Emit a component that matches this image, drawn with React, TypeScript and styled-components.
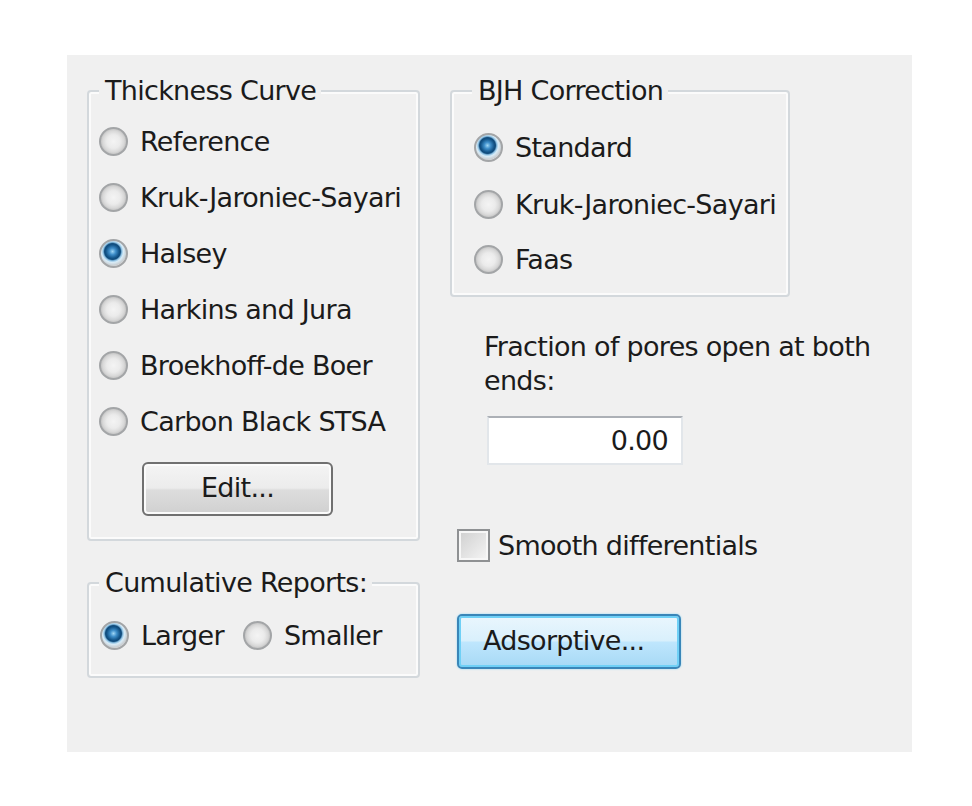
import React from 'react';
import styled, { createGlobalStyle } from 'styled-components';

const Global = createGlobalStyle`
  html, body { margin: 0; padding: 0; background: #ffffff; }
  body { font-family: "DejaVu Sans", Verdana, sans-serif; }
`;

const Page = styled.div`
  width: 972px;
  height: 806px;
  box-sizing: border-box;
  padding: 55px 0 0 67px;
`;

const Panel = styled.div`
  width: 845px;
  height: 697px;
  box-sizing: border-box;
  background: #f0f0f0;
  padding: 21px 0 0 20px;
  display: grid;
  grid-template-columns: 333px 440px;
  column-gap: 30px;
  align-items: start;
  font-size: 27px;
  letter-spacing: -0.7px;
  color: #1b1b1b;
`;

const Column = styled.div`
  display: flex;
  flex-direction: column;
  align-items: flex-start;
`;

const GroupBox = styled.fieldset<{ $w: number; $pl: number; $pt: number; $pb: number; $mt?: number }>`
  margin: ${(p) => p.$mt ?? 0}px 0 0 0;
  width: ${(p) => p.$w}px;
  box-sizing: border-box;
  min-width: 0;
  border: 2px solid #d3d8dc;
  border-radius: 4px;
  box-shadow: inset 0 0 0 2px #fbfbfb;
  padding: ${(p) => p.$pt}px 0 ${(p) => p.$pb}px ${(p) => p.$pl}px;
  display: flex;
  flex-direction: column;
  align-items: flex-start;
`;

const Legend = styled.legend<{ $ml?: number }>`
  margin-left: ${(p) => p.$ml ?? 0}px;
  padding: 0 5px 0 6px;
  line-height: 30px;
  background: #f0f0f0;
`;

const OptionRow = styled.label<{ $h?: number }>`
  display: flex;
  align-items: center;
  gap: 12px;
  height: ${(p) => p.$h ?? 56}px;
  white-space: nowrap;
`;

const InlineOptions = styled.div`
  display: flex;
  align-items: center;
  gap: 19px;
`;

const RadioCircle = styled.span<{ $checked?: boolean }>`
  width: 29px;
  height: 29px;
  flex: none;
  box-sizing: border-box;
  border-radius: 50%;
  border: 2px solid #a3a5a7;
  background: ${(p) =>
    p.$checked
      ? 'radial-gradient(circle at 46% 42%, #9fd6f5 0%, #3f8fca 16%, #125387 34%, #0f4a7a 40%, #8ec2e4 47%, #d9ecf7 55%, #c9cdd0 70%, #f6f6f6 76%)'
      : 'radial-gradient(circle at 50% 50%, #f4f4f4 0%, #ebebeb 38%, #dadada 58%, #c8c8c8 70%, #f6f6f6 76%)'};
`;

const CheckBox = styled.span`
  width: 33px;
  height: 33px;
  flex: none;
  box-sizing: border-box;
  border: 2px solid #8f9193;
  box-shadow: inset 0 0 0 2px #f7f7f7;
  background: linear-gradient(135deg, #cfcfcf 0%, #e4e4e4 55%, #f6f6f6 100%);
`;

const EditButton = styled.button`
  margin: 13px 0 0 43px;
  width: 191px;
  height: 54px;
  box-sizing: border-box;
  border: 2px solid #707070;
  border-radius: 6px;
  background: linear-gradient(#f4f4f4 0%, #ececec 48%, #dddddd 52%, #d0d0d0 100%);
  box-shadow: inset 0 0 0 2px #fbfbfb;
  font: inherit;
  letter-spacing: inherit;
  color: #1b1b1b;
  padding: 0 0 3px 0;
`;

const AdsorptiveButton = styled.button`
  margin: 52px 0 0 7px;
  width: 224px;
  height: 55px;
  box-sizing: border-box;
  border: 2px solid #3a86b8;
  border-radius: 5px;
  background: linear-gradient(#eaf6fd 0%, #d9f0fc 48%, #bee6fd 52%, #a7d9f5 100%);
  box-shadow: inset 0 0 0 2px #6fd0f6, 0 0 2px #86d6f8;
  font: inherit;
  letter-spacing: inherit;
  color: #1b1b1b;
  text-align: left;
  padding: 0 0 2px 24px;
`;

const FractionLabel = styled.div`
  margin: 33px 0 0 34px;
  width: 405px;
  line-height: 34px;
`;

const NumberBox = styled.div`
  margin: 18px 0 0 37px;
  width: 196px;
  height: 49px;
  box-sizing: border-box;
  background: #ffffff;
  border: 2px solid #e2e6ea;
  border-top-color: #acb0b6;
  padding-right: 13px;
  display: flex;
  align-items: center;
  justify-content: flex-end;
`;

const CheckRow = styled.label`
  margin: 64px 0 0 7px;
  display: flex;
  align-items: center;
  gap: 8px;
  height: 33px;
  white-space: nowrap;
`;

const Radio = ({ label, checked, h }: { label: string; checked?: boolean; h?: number }) => (
  <OptionRow $h={h}>
    <RadioCircle $checked={checked} />
    <span>{label}</span>
  </OptionRow>
);

export default function App() {
  return (
    <>
      <Global />
      <Page>
        <Panel>
          <Column>
            <GroupBox $w={333} $pl={10} $pt={7} $pb={23}>
              <Legend>Thickness Curve</Legend>
              <Radio label="Reference" />
              <Radio label="Kruk-Jaroniec-Sayari" />
              <Radio label="Halsey" checked />
              <Radio label="Harkins and Jura" />
              <Radio label="Broekhoff-de Boer" />
              <Radio label="Carbon Black STSA" />
              <EditButton>Edit...</EditButton>
            </GroupBox>
            <GroupBox $w={333} $pl={11} $pt={9} $pb={13} $mt={27}>
              <Legend $ml={-1}>Cumulative Reports:</Legend>
              <InlineOptions>
                <Radio label="Larger" checked />
                <Radio label="Smaller" />
              </InlineOptions>
            </GroupBox>
          </Column>
          <Column>
            <GroupBox $w={340} $pl={22} $pt={13} $pb={8}>
              <Legend $ml={-2}>BJH Correction</Legend>
              <Radio label="Standard" checked h={57} />
              <Radio label="Kruk-Jaroniec-Sayari" h={56} />
              <Radio label="Faas" h={55} />
            </GroupBox>
            <FractionLabel>Fraction of pores open at both ends:</FractionLabel>
            <NumberBox>0.00</NumberBox>
            <CheckRow>
              <CheckBox />
              <span>Smooth differentials</span>
            </CheckRow>
            <AdsorptiveButton>Adsorptive...</AdsorptiveButton>
          </Column>
        </Panel>
      </Page>
    </>
  );
}
